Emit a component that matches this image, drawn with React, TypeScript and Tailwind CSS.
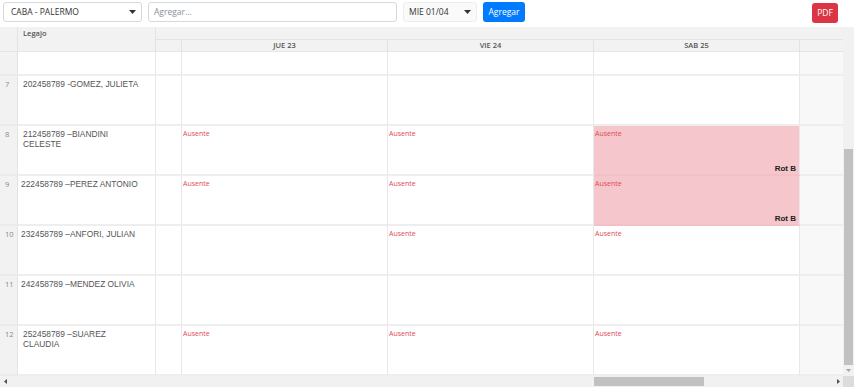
import React from "react";

type Cell = null | "a" | "ap";
const rows: { n: number; name: string[]; cells: Cell[]; shift?: boolean }[] = [
  { n: 7, name: ["202458789 -GOMEZ, JULIETA"], cells: [null, null, null] },
  { n: 8, name: ["212458789 –BIANDINI", "CELESTE"], cells: ["a", "a", "ap"] },
  { n: 9, name: ["222458789 –PEREZ ANTONIO"], cells: ["a", "a", "ap"], shift: true },
  { n: 10, name: ["232458789 –ANFORI, JULIAN"], cells: [null, "a", "a"], shift: true },
  { n: 11, name: ["242458789 –MENDEZ OLIVIA"], cells: [null, null, null], shift: true },
  { n: 12, name: ["252458789 –SUAREZ", "CLAUDIA"], cells: ["a", "a", "a"] },
];

const Caret = () => (
  <svg width="7" height="4" viewBox="0 0 7 4" className="shrink-0">
    <path d="M0 0 L7 0 L3.5 4 Z" fill="#333" />
  </svg>
);

export default function App() {
  const cols = "grid-cols-[18px_138px_26px_206px_206px_206px_43px]";
  return (
    <div
      className="w-[854px] h-[387px] overflow-hidden bg-white flex flex-col"
      style={{ fontFamily: '"Open Sans", "Liberation Sans", sans-serif' }}
    >
      {/* top bar */}
      <div className="h-[27px] shrink-0 flex items-start pt-[2px] pl-[3px] pr-[16px] gap-[6px]">
        <div className="w-[139px] h-[20px] border border-[#d5d9de] rounded-[3px] flex items-center justify-between pl-[7px] pr-[5px] text-[8.5px] text-[#333]">
          <span>CABA - PALERMO</span>
          <Caret />
        </div>
        <div className="w-[249px] h-[20px] border border-[#d5d9de] rounded-[3px] flex items-center pl-[5px] text-[8.5px] text-[#8a9096]">
          Agregar...
        </div>
        <div className="w-[74px] h-[20px] border border-[#eceef0] bg-[#fafafa] rounded-[3px] flex items-center justify-between pl-[5px] pr-[5px] text-[8.5px] text-[#333]">
          <span>MIE 01/04</span>
          <Caret />
        </div>
        <div className="w-[42px] h-[20px] bg-[#007bff] rounded-[3px] flex items-center justify-center text-[8.5px] text-white">
          Agregar
        </div>
        <div className="flex-1" />
        <div className="w-[26px] h-[20px] mt-[1px] bg-[#dc3545] rounded-[3px] flex items-center justify-center text-[8.5px] text-white">
          PDF
        </div>
      </div>

      {/* table + vertical scrollbar */}
      <div className="flex h-[349px] shrink-0">
        <div className="w-[843px] flex flex-col">
          {/* header */}
          <div className={`grid ${cols} bg-[#f2f2f2] h-[25px] border-b border-[#e6e6e6]`}>
            <div className="row-span-2 border-r border-[#e3e3e3]" />
            <div className="row-span-2 border-r border-[#e3e3e3] pl-[5px] pt-[1px] text-[7.5px] font-semibold text-[#555] leading-[10px]">
              Legajo
            </div>
            <div className="col-span-5 h-[13px] border-b border-[#e3e3e3]" />
            <div className="h-[12px] border-r border-[#e3e3e3]" />
            {["JUE 23", "VIE 24", "SAB 25"].map((d) => (
              <div
                key={d}
                className="h-[12px] border-r border-[#e3e3e3] flex items-center justify-center text-[7.5px] font-semibold text-[#555]"
              >
                {d}
              </div>
            ))}
            <div className="h-[12px]" />
          </div>

          {/* partial row */}
          <div className={`grid ${cols} h-[24px]`}>
            <div className="bg-[#f2f2f2] border-r border-[#e3e3e3] border-b-2 border-b-[#ebebeb]" />
            <div className="border-r border-[#e8e8e8] border-b-2 border-b-[#eeeeee]" />
            <div className="border-r border-[#e8e8e8] border-b-2 border-b-[#eeeeee]" />
            <div className="border-r border-[#e8e8e8] border-b-2 border-b-[#eeeeee]" />
            <div className="border-r border-[#e8e8e8] border-b-2 border-b-[#eeeeee]" />
            <div className="border-r border-[#e8e8e8] border-b-2 border-b-[#eeeeee]" />
            <div className="bg-[#f8f8f8] border-b-2 border-b-[#eeeeee]" />
          </div>

          {rows.map((r) => (
            <div key={r.n} className={`grid ${cols} h-[50px]`}>
              <div className="bg-[#f2f2f2] border-r border-[#e3e3e3] border-b-2 border-b-[#ebebeb] pl-[5px] pt-[3px] text-[7.5px] leading-[10px] text-[#888]">
                {r.n}
              </div>
              <div
                className={`border-r border-[#e8e8e8] border-b-2 border-b-[#eeeeee] pt-[3px] ${
                  r.shift ? "pl-[3px]" : "pl-[5px]"
                } text-[8.4px] leading-[10px] text-[#555]`}
                style={{ fontFamily: '"Liberation Sans", Arial, sans-serif' }}
              >
                {r.name.map((l, i) => (
                  <div key={i}>{l}</div>
                ))}
              </div>
              <div className="border-r border-[#e8e8e8] border-b-2 border-b-[#eeeeee]" />
              {r.cells.map((c, i) =>
                c === "ap" ? (
                  <div
                    key={i}
                    className="bg-[#f5c6cb] border-r border-[#e8e8e8] border-b-2 border-b-[#f2c0c6] flex flex-col justify-between pl-[1px] pr-[3px] pt-[3px] pb-0"
                  >
                    <div className="text-[7px] leading-[9px] text-[#e04a59]">Ausente</div>
                    <div
                      className="text-right text-[8px] leading-[10px] font-bold text-[#222]"
                      style={{ fontFamily: '"Liberation Sans", Arial, sans-serif' }}
                    >
                      Rot B
                    </div>
                  </div>
                ) : (
                  <div
                    key={i}
                    className="border-r border-[#e8e8e8] border-b-2 border-b-[#eeeeee] pl-[1px] pt-[3px]"
                  >
                    {c === "a" && (
                      <div className="text-[7px] leading-[9px] text-[#e04a59]">Ausente</div>
                    )}
                  </div>
                )
              )}
              <div className="bg-[#f8f8f8] border-b-2 border-b-[#eeeeee]" />
            </div>
          ))}
        </div>

        {/* vertical scrollbar */}
        <div className="w-[11px] bg-[#f1f1f1] flex flex-col">
          <div className="h-[122px]" />
          <div className="h-[216px] mx-[1px] bg-[#c1c1c1]" />
          <div className="flex-1 flex items-center justify-center">
            <svg width="5" height="3" viewBox="0 0 5 3">
              <path d="M0 0 L5 0 L2.5 3 Z" fill="#a3a3a3" />
            </svg>
          </div>
        </div>
      </div>

      {/* horizontal scrollbar */}
      <div className="h-[11px] shrink-0 flex">
        <div className="w-[843px] bg-[#f1f1f1] flex items-center">
          <div className="w-[10px] flex items-center justify-center">
            <svg width="3" height="5" viewBox="0 0 3 5">
              <path d="M3 0 L3 5 L0 2.5 Z" fill="#505050" />
            </svg>
          </div>
          <div className="w-[584px]" />
          <div className="w-[110px] h-[9px] bg-[#c1c1c1]" />
          <div className="flex-1" />
          <div className="w-[10px] flex items-center justify-center">
            <svg width="3" height="5" viewBox="0 0 3 5">
              <path d="M0 0 L0 5 L3 2.5 Z" fill="#505050" />
            </svg>
          </div>
        </div>
        <div className="w-[11px] bg-[#dcdcdc]" />
      </div>
    </div>
  );
}
